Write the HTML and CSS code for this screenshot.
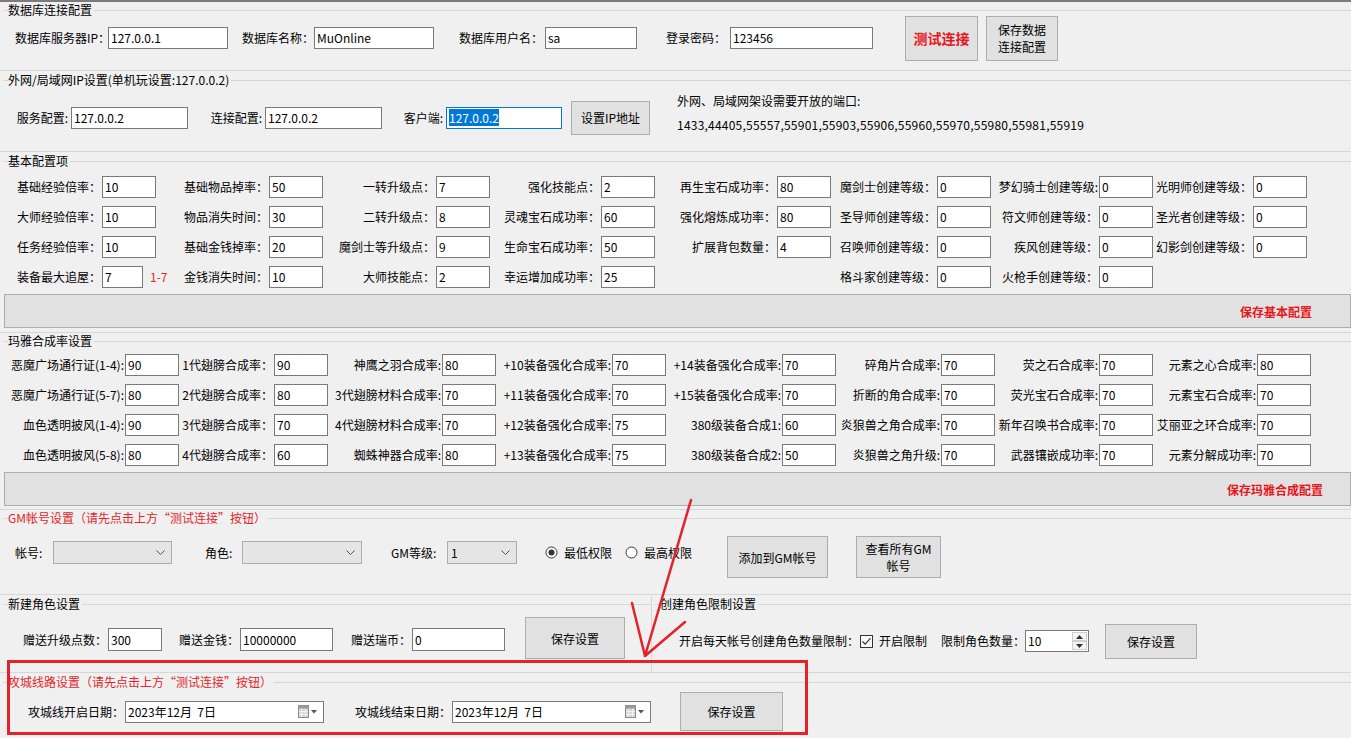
FILE: index.html
```html
<!DOCTYPE html>
<html lang="zh-CN">
<head>
<meta charset="utf-8">
<title>服务器配置</title>
<link rel="stylesheet" href="styles.css">
</head>
<body>
<div class="window">

 <section class="group g1">
  <div class="gtitle"><span>数据库连接配置</span></div>
  <div class="row r1">
   <span class="lbl left pl15">数据库服务器IP：</span><div class="tb">127.0.0.1</div>
   <span class="lbl left pl14">数据库名称：</span><div class="tb">MuOnline</div>
   <span class="lbl left pl25">数据库用户名：</span><div class="tb">sa</div>
   <span class="lbl left pl29">登录密码：</span><div class="tb">123456</div>
   <button class="btn btn-test">测试连接</button>
   <button class="btn btn-db">保存数据<br>连接配置</button>
  </div>
 </section>

 <section class="group g2">
  <div class="gtitle"><span>外网/局域网IP设置(单机玩设置:127.0.0.2)</span></div>
  <div class="row r2">
   <span class="lbl">服务配置:</span><div class="tb">127.0.0.2</div>
   <span class="lbl">连接配置:</span><div class="tb">127.0.0.2</div>
   <span class="lbl">客户端:</span><div class="tb focus"><span class="sel">127.0.0.2</span></div>
   <button class="btn btn-ip">设置IP地址</button>
   <div class="ports">外网、局域网架设需要开放的端口:<br><span class="nums">1433,44405,55557,55901,55903,55906,55960,55970,55980,55981,55919</span></div>
  </div>
 </section>

 <section class="group g3">
  <div class="gtitle"><span>基本配置项</span></div>
  <div class="grid r3">
   <span class="lbl">基础经验倍率：</span><div class="tb">10</div>
   <span class="lbl">基础物品掉率：</span><div class="tb">50</div>
   <span class="lbl">一转升级点：</span><div class="tb">7</div>
   <span class="lbl">强化技能点：</span><div class="tb">2</div>
   <span class="lbl">再生宝石成功率：</span><div class="tb">80</div>
   <span class="lbl">魔剑士创建等级：</span><div class="tb">0</div>
   <span class="lbl">梦幻骑士创建等级:</span><div class="tb">0</div>
   <span class="lbl">光明师创建等级：</span><div class="tb">0</div>

   <span class="lbl">大师经验倍率：</span><div class="tb">10</div>
   <span class="lbl">物品消失时间：</span><div class="tb">30</div>
   <span class="lbl">二转升级点：</span><div class="tb">8</div>
   <span class="lbl">灵魂宝石成功率：</span><div class="tb">60</div>
   <span class="lbl">强化熔炼成功率：</span><div class="tb">80</div>
   <span class="lbl">圣导师创建等级：</span><div class="tb">0</div>
   <span class="lbl">符文师创建等级：</span><div class="tb">0</div>
   <span class="lbl">圣光者创建等级：</span><div class="tb">0</div>

   <span class="lbl">任务经验倍率：</span><div class="tb">10</div>
   <span class="lbl">基础金钱掉率：</span><div class="tb">20</div>
   <span class="lbl">魔剑士等升级点：</span><div class="tb">9</div>
   <span class="lbl">生命宝石成功率：</span><div class="tb">50</div>
   <span class="lbl">扩展背包数量：</span><div class="tb">4</div>
   <span class="lbl">召唤师创建等级：</span><div class="tb">0</div>
   <span class="lbl">疾风创建等级：</span><div class="tb">0</div>
   <span class="lbl">幻影剑创建等级：</span><div class="tb">0</div>

   <span class="lbl">装备最大追屋：</span><div class="tbwrap"><div class="tb tb-short">7</div><span class="hint">1-7</span></div>
   <span class="lbl">金钱消失时间：</span><div class="tb">10</div>
   <span class="lbl">大师技能点：</span><div class="tb">2</div>
   <span class="lbl">幸运增加成功率：</span><div class="tb">25</div>
   <span></span><span></span>
   <span class="lbl">格斗家创建等级：</span><div class="tb">0</div>
   <span class="lbl">火枪手创建等级：</span><div class="tb">0</div>
   <span></span><span></span>
  </div>
  <button class="btn bar bar-basic">保存基本配置</button>
 </section>

 <section class="group g4">
  <div class="gtitle"><span>玛雅合成率设置</span></div>
  <div class="grid r4">
   <span class="lbl">恶魔广场通行证(1-4):</span><div class="tb">90</div>
   <span class="lbl">1代翅膀合成率：</span><div class="tb">90</div>
   <span class="lbl">神鹰之羽合成率:</span><div class="tb">80</div>
   <span class="lbl">+10装备强化合成率:</span><div class="tb">70</div>
   <span class="lbl">+14装备强化合成率:</span><div class="tb">70</div>
   <span class="lbl">碎角片合成率:</span><div class="tb">70</div>
   <span class="lbl">荧之石合成率:</span><div class="tb">70</div>
   <span class="lbl">元素之心合成率:</span><div class="tb">80</div>

   <span class="lbl">恶魔广场通行证(5-7):</span><div class="tb">80</div>
   <span class="lbl">2代翅膀合成率：</span><div class="tb">80</div>
   <span class="lbl">3代翅膀材料合成率:</span><div class="tb">70</div>
   <span class="lbl">+11装备强化合成率:</span><div class="tb">70</div>
   <span class="lbl">+15装备强化合成率:</span><div class="tb">70</div>
   <span class="lbl">折断的角合成率:</span><div class="tb">70</div>
   <span class="lbl">荧光宝石合成率:</span><div class="tb">70</div>
   <span class="lbl">元素宝石合成率:</span><div class="tb">70</div>

   <span class="lbl">血色透明披风(1-4):</span><div class="tb">90</div>
   <span class="lbl">3代翅膀合成率：</span><div class="tb">70</div>
   <span class="lbl">4代翅膀材料合成率:</span><div class="tb">70</div>
   <span class="lbl">+12装备强化合成率:</span><div class="tb">75</div>
   <span class="lbl">380级装备合成1:</span><div class="tb">60</div>
   <span class="lbl">炎狼兽之角合成率:</span><div class="tb">70</div>
   <span class="lbl">新年召唤书合成率:</span><div class="tb">70</div>
   <span class="lbl">艾丽亚之环合成率:</span><div class="tb">70</div>

   <span class="lbl">血色透明披风(5-8):</span><div class="tb">80</div>
   <span class="lbl">4代翅膀合成率：</span><div class="tb">60</div>
   <span class="lbl">蜘蛛神器合成率:</span><div class="tb">80</div>
   <span class="lbl">+13装备强化合成率:</span><div class="tb">75</div>
   <span class="lbl">380级装备合成2:</span><div class="tb">50</div>
   <span class="lbl">炎狼兽之角升级:</span><div class="tb">70</div>
   <span class="lbl">武器镶嵌成功率:</span><div class="tb">70</div>
   <span class="lbl">元素分解成功率:</span><div class="tb">70</div>
  </div>
  <button class="btn bar bar-maya">保存玛雅合成配置</button>
 </section>

 <section class="group g5">
  <div class="gtitle red"><span>GM帐号设置（请先点击上方“测试连接”按钮）</span></div>
  <div class="grid r5">
   <span class="lbl left pl15">帐号:</span>
   <div class="cb"><span></span><svg class="chev" width="9" height="5" viewBox="0 0 9 5"><path d="M0.5 0.5 L4.5 4.5 L8.5 0.5" fill="none" stroke="#555" stroke-width="1"/></svg></div>
   <span class="lbl left pl33">角色:</span>
   <div class="cb"><span></span><svg class="chev" width="9" height="5" viewBox="0 0 9 5"><path d="M0.5 0.5 L4.5 4.5 L8.5 0.5" fill="none" stroke="#555" stroke-width="1"/></svg></div>
   <span class="lbl left pl29">GM等级:</span>
   <div class="cb"><span>1</span><svg class="chev" width="9" height="5" viewBox="0 0 9 5"><path d="M0.5 0.5 L4.5 4.5 L8.5 0.5" fill="none" stroke="#555" stroke-width="1"/></svg></div>
   <label class="radio pl28"><svg width="13" height="13" viewBox="0 0 13 13"><circle cx="6.5" cy="6.5" r="5.5" fill="#fff" stroke="#333"/><circle cx="6.5" cy="6.5" r="3" fill="#333"/></svg><span>最低权限</span></label>
   <label class="radio"><svg width="13" height="13" viewBox="0 0 13 13"><circle cx="6.5" cy="6.5" r="5.5" fill="#fff" stroke="#333"/></svg><span>最高权限</span></label>
   <button class="btn btn-gm1">添加到GM帐号</button>
   <button class="btn btn-gm2">查看所有GM<br>帐号</button>
  </div>
 </section>

 <div class="split">
  <section class="group g6">
   <div class="gtitle"><span>新建角色设置</span></div>
   <div class="grid r6">
    <span class="lbl">赠送升级点数：</span><div class="tb">300</div>
    <span class="lbl">赠送金钱：</span><div class="tb">10000000</div>
    <span class="lbl">赠送瑞币：</span><div class="tb">0</div>
    <button class="btn btn-save6">保存设置</button>
   </div>
  </section>
  <section class="group g6b">
   <div class="gtitle"><span>创建角色限制设置</span></div>
   <div class="row r6b">
    <span class="lbl">开启每天帐号创建角色数量限制：</span>
    <label class="check"><svg width="13" height="13" viewBox="0 0 13 13"><rect x="0.5" y="0.5" width="12" height="12" fill="#fff" stroke="#333"/><path d="M2.5 6.5 L5.2 9.2 L10.5 3.2" fill="none" stroke="#333" stroke-width="1.2"/></svg><span>开启限制</span></label>
    <span class="lbl lim">限制角色数量：</span>
    <div class="nud"><span class="nudv">10</span><div class="spin"><span class="sp"><svg width="7" height="4" viewBox="0 0 7 4"><path d="M0 4 L3.5 0 L7 4Z" fill="#333"/></svg></span><span class="sp"><svg width="7" height="4" viewBox="0 0 7 4"><path d="M0 0 L3.5 4 L7 0Z" fill="#333"/></svg></span></div></div>
    <button class="btn btn-save6b">保存设置</button>
   </div>
  </section>
 </div>

 <section class="group g7">
  <div class="gtitle red"><span>攻城线路设置（请先点击上方“测试连接”按钮）</span></div>
  <div class="grid r7">
   <span class="lbl">攻城线开启日期：</span>
   <div class="dp"><span class="dpv">2023年12月  7日</span><svg width="22" height="13" viewBox="0 0 22 13"><rect x="0.5" y="0.5" width="10" height="12" fill="#d4d4d4" stroke="#8a8a8a"/><rect x="0.5" y="0.5" width="10" height="3" fill="#9a9a9a"/><path d="M3.5 4 V12 M7.5 4 V12 M1 6.5 H10 M1 9.5 H10" stroke="#f4f4f4" stroke-width="1"/><path d="M13 5 L19 5 L16 8.5Z" fill="#555"/></svg></div>
   <span class="lbl">攻城线结束日期：</span>
   <div class="dp"><span class="dpv">2023年12月  7日</span><svg width="22" height="13" viewBox="0 0 22 13"><rect x="0.5" y="0.5" width="10" height="12" fill="#d4d4d4" stroke="#8a8a8a"/><rect x="0.5" y="0.5" width="10" height="3" fill="#9a9a9a"/><path d="M3.5 4 V12 M7.5 4 V12 M1 6.5 H10 M1 9.5 H10" stroke="#f4f4f4" stroke-width="1"/><path d="M13 5 L19 5 L16 8.5Z" fill="#555"/></svg></div>
   <button class="btn btn-save7">保存设置</button>
  </div>
 </section>
</div>

<div class="mark-rect"></div>
<svg class="mark-arrow" width="1351" height="738" viewBox="0 0 1351 738">
 <path d="M691 500 L645 656 M632 603 L645 656 M685 622 L645 656" fill="none" stroke="#e2232a" stroke-width="2.5" stroke-linecap="round"/>
</svg>
</body>
</html>
```

FILE: styles.css
```css
* { box-sizing: border-box; }
html, body { margin: 0; padding: 0; }
body {
  width: 1351px;
  height: 738px;
  overflow: hidden;
  position: relative;
  background: #f0f0f0;
  color: #000;
  font-family: "Noto Sans CJK SC", "Microsoft YaHei", sans-serif;
  font-size: 12px;
  line-height: 16px;
}
.window { border-top: 2px solid #7b7b7b; }

/* group boxes */
.group { border-bottom: 1px solid #d7d7d7; }
.gtitle {
  display: flex;
  align-items: center;
  height: 16px;
  white-space: nowrap;
}
.gtitle::before {
  content: "";
  width: 5px;
  margin-left: 3px;
  border-top: 1px solid #d7d7d7;
}
.gtitle::after {
  content: "";
  flex: 1;
  border-top: 1px solid #d7d7d7;
  margin-left: 2px;
}
.gtitle.red { color: #e3262b; }

.g1 { height: 69px; }
.g2 { height: 80px; margin-top: 1px; }
.g3 { height: 180px; margin-top: 1px; }
.g4 { height: 177px; }
.g5 { height: 85px; }
.split { display: flex; height: 77px; margin-top: 1px; }
.g6 { width: 652px; height: 77px; border-right: 1px solid #d7d7d7; }
.g6b { flex: 1; height: 77px; }
.g7 { height: 70px; margin-top: 1px; }

/* common controls */
.lbl {
  text-align: right;
  padding-right: 1px;
  white-space: nowrap;
}
.lbl.left { text-align: left; padding-right: 0; }
.pl14 { padding-left: 14px; }
.pl15 { padding-left: 15px; }
.pl25 { padding-left: 25px; }
.pl28 { padding-left: 28px; }
.pl29 { padding-left: 29px; }
.pl33 { padding-left: 33px; }

.tb {
  height: 22px;
  border: 1px solid #7a7a7a;
  background: #fff;
  padding-left: 2px;
  line-height: 20px;
  white-space: nowrap;
  overflow: hidden;
}
.tb.focus { border-color: #0078d7; }
.sel { background: #0078d7; color: #fff; }

.btn {
  font-family: inherit;
  font-size: 12px;
  line-height: 17px;
  color: #000;
  background: #e1e1e1;
  border: 1px solid #adadad;
  padding: 0;
  margin: 0;
  border-radius: 0;
}

.row { display: grid; align-items: center; }
.grid { display: grid; }

/* group 1 */
.r1 {
  margin-top: -3px;
  height: 46px;
  grid-template-columns: 108px 120px 86px 120px 111px 92px 93px 143px 105px 80px;
}
.btn-test {
  justify-self: end;
  width: 73px;
  height: 45px;
  color: #e8151b;
  font-weight: bold;
  font-size: 14px;
}
.btn-db { justify-self: end; width: 72px; height: 45px; }

/* group 2 */
.r2 {
  margin-top: 10px;
  height: 34px;
  grid-template-columns: 71px 117px 77px 117px 64px 116px 88px 1fr;
}
.r2 .lbl { padding-right: 3px; }
.btn-ip { justify-self: end; width: 79px; height: 34px; }
.ports {
  align-self: start;
  margin-top: -9px;
  padding-left: 27px;
  line-height: 24px;
  white-space: nowrap;
}
.nums { letter-spacing: 0.22px; }

/* group 3 */
.r3 {
  margin-top: 3px;
  grid-template-columns: 102px 54px 113px 54px 113px 54px 111px 54px 122px 54px 106px 54px 108px 54px 100px 54px;
  grid-auto-rows: 30px;
  align-items: center;
}
.tbwrap { display: flex; align-items: center; }
.tb-short { width: 41px; flex-shrink: 0; }
.hint { color: #e3262b; margin-left: 7px; white-space: nowrap; }

.bar {
  display: flex;
  align-items: center;
  justify-content: flex-end;
  width: calc(100% - 4px);
  height: 34px;
  margin: 2px 0 0 4px;
  color: #e8151b;
  font-weight: bold;
}
.bar-basic { padding-right: 38px; }
.bar-maya { padding-right: 27px; }

/* group 4 */
.r4 {
  margin-top: 1px;
  grid-template-columns: 125px 54px 95px 54px 114px 54px 116px 54px 116px 54px 105px 54px 104px 54px 104px 54px;
  grid-auto-rows: 30px;
  align-items: center;
}

/* group 5 */
.r5 {
  margin-top: 10px;
  height: 42px;
  grid-template-columns: 53px 119px 70px 120px 85px 70px 108px 75px 128px 113px;
  align-items: start;
}
.r5 .lbl, .r5 .cb, .r5 .radio { margin-top: 5px; height: 23px; line-height: 23px; }
.cb {
  display: flex;
  align-items: center;
  justify-content: space-between;
  border: 1px solid #adadad;
  background: #e5e5e5;
  padding: 0 6px 0 3px;
}
.radio { display: flex; align-items: center; white-space: nowrap; }
.radio span { margin-left: 6px; }
.btn-gm1 { justify-self: end; width: 101px; height: 42px; }
.btn-gm2 { justify-self: end; width: 85px; height: 42px; }

/* group 6 */
.r6 {
  margin-top: 5px;
  height: 42px;
  grid-template-columns: 108px 54px 78px 93px 79px 93px 120px;
  align-items: start;
}
.r6 .lbl, .r6 .tb { margin-top: 11px; height: 23px; line-height: 21px; }
.r6 .lbl { line-height: 23px; }
.btn-save6 { justify-self: end; width: 100px; height: 42px; }

.r6b {
  display: flex;
  align-items: center;
  margin-top: 11px;
  height: 36px;
  padding-left: 27px;
}
.check { display: flex; align-items: center; white-space: nowrap; }
.check span { margin-left: 6px; }
.lim { margin-left: 14px; }
.nud {
  display: flex;
  width: 64px;
  height: 22px;
  margin-left: -1px;
  border: 1px solid #7a7a7a;
  background: #fff;
}
.nudv { flex: 1; padding-left: 2px; line-height: 20px; }
.spin { display: flex; flex-direction: column; width: 16px; padding: 1px 1px 1px 0; }
.sp {
  flex: 1;
  display: flex;
  align-items: center;
  justify-content: center;
  border: 1px solid #cfcfcf;
  background: #f4f4f4;
}
.btn-save6b { margin-left: 16px; width: 92px; height: 35px; }

/* group 7 */
.r7 {
  margin-top: 2px;
  height: 39px;
  grid-template-columns: 125px 199px 128px 199px 132px;
  align-items: center;
}
.dp {
  display: flex;
  align-items: center;
  justify-content: space-between;
  height: 22px;
  border: 1px solid #7a7a7a;
  background: #fff;
  padding: 0 3px 0 2px;
}
.dpv { white-space: pre; line-height: 20px; }
.btn-save7 { justify-self: end; width: 103px; height: 39px; }

/* annotation overlay */
.mark-rect {
  position: absolute;
  left: 7px;
  top: 660px;
  width: 801px;
  height: 75px;
  border: 3px solid #e2232a;
  pointer-events: none;
}
.mark-arrow {
  position: absolute;
  left: 0;
  top: 0;
  pointer-events: none;
}
```
